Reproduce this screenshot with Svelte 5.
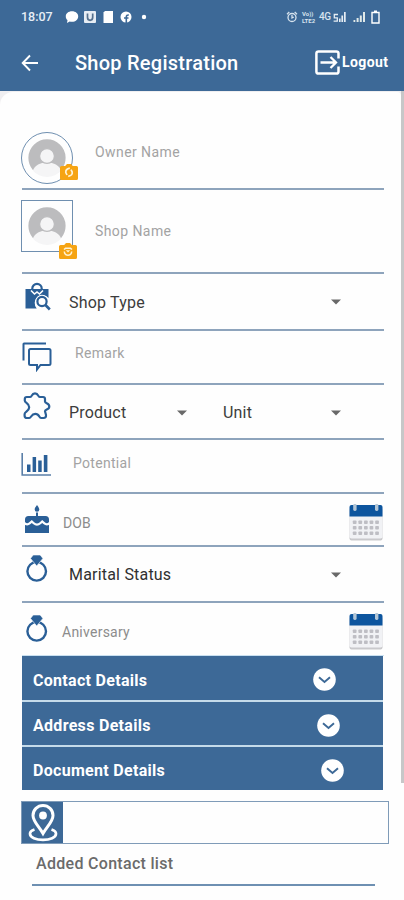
<script>
  const panels = [
    { title: 'Contact Details', cls: 'contact' },
    { title: 'Address Details', cls: 'address' },
    { title: 'Document Details', cls: 'document' }
  ];
  const cols = [5.8, 11.4, 17, 22.6, 28.2];
  const lines = [18.5, 24, 29.5];
</script>

{#snippet person()}
  <svg class="person" width="38" height="38" viewBox="0 0 38 38">
    <path d="M5 31.200A18.600 18.600 0 1 1 33 31.200z" fill="#bcbcbe" />
    <path d="M4.800 31.400C7 26.500 12 23.500 19 23.500s12 3 14.200 7.900A18.600 18.600 0 0 1 4.800 31.400z" fill="#f5f5f6" />
    <circle cx="19" cy="17" r="7.400" fill="#f5f5f6" stroke="#bcbcbe" stroke-width="1.200" />
  </svg>
{/snippet}

{#snippet caret()}
  <svg class="caret" width="10" height="6" viewBox="0 0 10 6"><path d="M0 .4h10L5 5.4z" fill="#696969" /></svg>
{/snippet}

{#snippet ring()}
  <svg class="icon ring" width="22" height="28" viewBox="0 0 22 28">
    <circle cx="10.700" cy="16.300" r="9.300" fill="none" stroke="#2a5f97" stroke-width="2.400" />
    <path d="M7.200 0h7L16.900 3.400 10.700 11 4.500 3.400z" fill="#2a5f97" stroke="#fefefe" stroke-width=".6" />
  </svg>
{/snippet}

{#snippet calendar()}
  <svg class="calendar" width="34" height="37" viewBox="0 0 34 37">
    <rect x=".5" y="4" width="33" height="32.500" rx="2" fill="#c9c9cc" />
    <rect x=".5" y="3" width="33" height="31.500" rx="2" fill="#f1f2f5" />
    <path d="M.5 12.500V3Q.5 1 2.500 1h29q2 0 2 2v9.500z" fill="#0d559e" />
    <rect x="4.200" y="0" width="3.400" height="7" rx="1.400" fill="#b3c6d6" />
    <rect x="26" y="0" width="3.400" height="7" rx="1.400" fill="#b3c6d6" />
    {#each lines as y}
      {#each cols as x}
        <rect x={x - 2} y={y - 2} width="3.700" height="3.500" rx=".8" fill="#bebec4" />
      {/each}
    {/each}
  </svg>
{/snippet}

<div class="screen">
  <header>
    <div class="status">
      <span class="time">18:07</span>
      <svg class="notices" width="84" height="14" viewBox="0 0 84 14">
        <path d="M7 1.200c3.600 0 6.200 2.200 6.200 5.200s-2.600 5.400-6.200 5.400c-1 0-1.600-.1-2.300-.3L2 13l.5-3C1.400 9.200.8 8 .8 6.400.8 3.400 3.400 1.200 7 1.200z" fill="#fff" />
        <rect x="19" y="1" width="12" height="12" rx="1" fill="#e7edf4" />
        <path d="M22.500 3.500v3.800q0 3 2.600 3t2.600-3V3.500" fill="none" stroke="#56718e" stroke-width="1.700" />
        <path d="M40 1h8v12h-9.500V2.500z" fill="#fff" />
        <circle cx="61" cy="7" r="5.500" fill="#fff" />
        <path d="M61.300 13V7.200q0-2.400 2.500-2.200M59 8h4.500" fill="none" stroke="#3d6997" stroke-width="1.600" />
        <circle cx="79" cy="7" r="2.200" fill="#fff" />
      </svg>
      <div class="signals">
        <svg width="12" height="12" viewBox="0 0 12 12" fill="none" stroke="#d7e3ee" stroke-width="1.300">
          <circle cx="6" cy="6.500" r="4" /><path d="M6 4v3l1.800-1M1 3.200 3.300 1M11 3.200 8.700 1" />
        </svg>
        <div class="volte"><span>Vo))</span><span>LTE2</span></div>
        <span class="net">4G</span>
        <svg class="bars" width="13" height="12" viewBox="0 0 13 12">
          <path d="M5 3.500H1.300v3.300h3v3.400H.6" fill="none" stroke="#e6edf4" stroke-width="1.300" />
          <path d="M6 7.500h1.600V11H6zM8.400 4.500h1.700V11H8.400zM11 1h1.700v10H11z" fill="#e6edf4" />
        </svg>
        <svg class="bars2" width="13" height="12" viewBox="0 0 13 12">
          <path d="M.5 9h1.800v2H.5zM3.600 7h2v4h-2zM6.800 4.500h2V11h-2zM10 1h2v10h-2z" fill="#e0e9e8" />
        </svg>
        <svg class="battery" width="9" height="14" viewBox="0 0 9 14">
          <path d="M1 2.500h7v10.500H1z" fill="none" stroke="#fff" stroke-width="1.400" /><path d="M3 .5h3v2H3z" fill="#fff" />
        </svg>
      </div>
    </div>
    <div class="bar">
      <svg class="back" width="18" height="18" viewBox="0 0 18 18" fill="none" stroke="#fff" stroke-width="1.900">
        <path d="M17 9H2M9 1.500 1.700 9 9 16.500" />
      </svg>
      <h1>Shop Registration</h1>
      <svg class="exit" width="25" height="25" viewBox="0 0 25 25" fill="none" stroke="#fff" stroke-width="2.500">
        <path d="M23.500 8.500V3.500Q23.500 1.400 21.400 1.400H3.500Q1.400 1.400 1.400 3.500V21.500Q1.400 23.600 3.500 23.600H21.400Q23.500 23.600 23.500 21.500V16.500" />
        <path d="M5.500 12.500H20.500M15.500 7l5.500 5.500-5.500 5.500" stroke-width="2.300" />
      </svg>
      <span class="logout">Logout</span>
    </div>
  </header>

  <main>
    <div class="card">
      <div class="row owner">
        <div class="avatar round">
          {@render person()}
          <svg class="badge" width="18" height="16" viewBox="0 0 18 16">
            <path d="M1.500 2h3.700L7 0h4l1.800 2h3.700Q18 2 18 3.500v11Q18 16 16.500 16h-15Q0 16 0 14.500v-11Q0 2 1.500 2z" fill="#f6a413" />
            <path d="M9.800 4.200Q5.500 5 5.800 8.500L7 11M8.200 12.300Q12.800 11.500 12.200 8L11 5.600" fill="none" stroke="#fff3d5" stroke-width="1.700" />
          </svg>
        </div>
        <span class="hint">Owner Name</span>
      </div>

      <div class="row shop">
        <div class="avatar square">
          {@render person()}
          <svg class="badge" width="18" height="16" viewBox="0 0 18 16">
            <path d="M1.500 2h3.700L7 0h4l1.800 2h3.700Q18 2 18 3.500v11Q18 16 16.500 16h-15Q0 16 0 14.500v-11Q0 2 1.500 2z" fill="#f6a413" />
            <path d="M5 6.500 6.500 5.300h5L13 6.500M5.300 8.500q.3 3.700 3.700 3.700t3.700-3.700" fill="none" stroke="#fff3d5" stroke-width="1.500" />
            <path d="M6.800 7.200h4.400L9 9.600z" fill="#fff3d5" />
          </svg>
        </div>
        <span class="hint">Shop Name</span>
      </div>

      <div class="row type">
        <svg class="icon" width="26" height="29" viewBox="0 0 26 29">
          <path d="M7.300 9V6.500a4.700 4.700 0 0 1 9.400 0V9" fill="none" stroke="#2a5f97" stroke-width="2.200" />
          <path d="M.5 7h23v9a7.500 7.500 0 0 0-11.800 10.500H.5z" fill="#2a5f97" />
          <path d="M6 8.500 9.500 12l2.500-2 2.500 2L18 8.500" fill="none" stroke="#fff" stroke-width="1.600" />
          <circle cx="17" cy="19.500" r="6.700" fill="#fff" />
          <circle cx="17" cy="19.500" r="4.600" fill="none" stroke="#2a5f97" stroke-width="2.200" />
          <path d="m20.500 23 4.300 4.500" stroke="#2a5f97" stroke-width="2.600" />
        </svg>
        <span class="value">Shop Type</span>
        {@render caret()}
      </div>

      <div class="row remark">
        <svg class="icon" width="30" height="30" viewBox="0 0 30 30" fill="none" stroke="#2a5f97" stroke-width="2">
          <path d="M1.500 18.500V2Q1.500 1.500 2 1.500H24" />
          <path d="M8.500 7h18.500Q28.500 7 28.500 8.500v13Q28.500 23 27 23h-8.500L15 27.500V23H8.500Q7 23 7 21.500v-13Q7 7 8.500 7z" />
        </svg>
        <span class="hint">Remark</span>
      </div>

      <div class="row product">
        <svg class="icon" width="28" height="28" viewBox="0 0 28 28" fill="none" stroke="#2a5f97" stroke-width="2.200" stroke-linejoin="round">
          <path d="M3.800 5H7.300C9.200 5 8.300 1.300 12 1.300S14.800 5 16.700 5H20Q22 5 22 7V9.600C22 11.600 26.300 10.900 26.300 14.400S22 17.200 22 19.200L23 23Q23.300 26 20.500 26H18C16 26 16.500 21.800 12.300 21.800S8.300 26 6.300 26H4Q1.600 26 1.600 23.700V22C1.600 19.800 6.200 19.300 6.200 15.200S1.800 11 1.800 8.800V7Q1.800 5 3.800 5z" />
        </svg>
        <span class="value">Product</span>
        {@render caret()}
        <span class="value unit">Unit</span>
        {@render caret()}
      </div>

      <div class="row potential">
        <svg class="icon" width="31" height="24" viewBox="0 0 31 24">
          <path d="M1.200 0v22H30" fill="none" stroke="#5a7fa8" stroke-width="1.600" />
          <path d="M6 11.500h3.500V19H6zM11.600 4h3.500v15h-3.500zM17.200 7.500h3.500V19h-3.500zM22.800 2h3.600v17h-3.600z" fill="#2a5f97" />
        </svg>
        <span class="hint">Potential</span>
      </div>

      <div class="row dob">
        <svg class="icon" width="24" height="28" viewBox="0 0 24 28" fill="#2a5f97">
          <path d="M12 0q2.600 3.200 2.300 4.400A2.300 2.300 0 0 1 9.700 4.400Q9.500 3.200 12 0zM11 7.500h2V12h-2z" />
          <path d="M3.500 11h17Q24 11 24 14.500V17q-2 2.400-4.200.3L17.200 15l-2.700 2.400q-2.500 2.200-5 0L6.800 15l-2.600 2.300Q2 19.400 0 17V14.500Q0 11 3.500 11z" />
          <path d="M0 20q3 1.300 5.600-1l1.200-1 1.200 1q4 3.400 8 0l1.200-1 1.200 1q2.600 2.300 5.600 1v8H0z" />
        </svg>
        <span class="hint">DOB</span>
        {@render calendar()}
      </div>

      <div class="row marital">
        {@render ring()}
        <span class="value">Marital Status</span>
        {@render caret()}
      </div>

      <div class="row anniversary">
        {@render ring()}
        <span class="hint">Aniversary</span>
        {@render calendar()}
      </div>

      <div class="panels">
        {#each panels as p}
          <div class="panel {p.cls}">
            <span>{p.title}</span>
            <svg width="23" height="23" viewBox="0 0 23 23">
              <circle cx="11.500" cy="11.500" r="11.300" fill="#fff" />
              <path d="m6 9.200 5.500 4.800L17 9.200" fill="none" stroke="#3d6997" stroke-width="1.900" />
            </svg>
          </div>
        {/each}
      </div>

      <div class="location">
        <div class="pin">
          <svg width="30" height="38" viewBox="0 0 30 38" fill="none" stroke="#fff" stroke-width="3">
            <path d="M15 29.500C11 22.500 5 17.500 5 11.500a10 10 0 0 1 20 0c0 6-6 11-10 18z" />
            <circle cx="15" cy="11.500" r="3.900" fill="#fff" stroke="none" />
            <path d="M6.500 25.500C3.500 26.500 2 28.200 2 29.800 2 33.500 8 35.800 15 35.800s13-2.300 13-6c0-1.600-1.500-3.300-4.500-4.300" stroke-width="2.700" />
          </svg>
        </div>
      </div>

      <div class="added">Added Contact list</div>
    </div>
    <div class="scrollbar"></div>
  </main>
</div>

<style>
  :global(body) { background: #fff; }
  .screen {
    width: 404px;
    height: 900px;
    overflow: hidden;
    font-family: Roboto, "Liberation Sans", sans-serif;
    background: #fefefe;
  }
  svg { display: block; flex: none; }
  span { white-space: nowrap; line-height: 20px; }

  header { height: 91px; box-sizing: border-box; background: #3d6997; color: #fff; }
  .status { display: flex; height: 34px; padding-left: 21px; align-items: flex-start; }
  .time { width: 44px; margin-top: 7px; font-size: 12.5px; font-weight: 500; color: #e6eef6; }
  .notices { margin-top: 10px; }
  .signals { display: flex; align-items: flex-start; margin-left: 137px; padding-top: 10px; }
  .signals svg { margin-top: 1px; }
  .volte { display: flex; flex-direction: column; width: 15px; margin-left: 4px; font-size: 6px; font-weight: 700; color: #d7e3ee; }
  .volte span { line-height: 7px; }
  .net { width: 12px; margin-left: 2px; font-size: 10px; font-weight: 500; line-height: 14px; letter-spacing: -.5px; color: #d7e3ee; }
  .signals .bars { margin-left: 2px; }
  .signals .bars2 { margin-left: 7px; }
  .signals .battery { margin: 0 0 0 5px; }
  .bar { display: flex; align-items: flex-start; height: 56px; padding-left: 21px; }
  .back { margin-top: 20px; }
  h1 { width: 163px; margin: 17px 0 0 36px; font-size: 20px; line-height: 24px; font-weight: 500; letter-spacing: .25px; white-space: nowrap; }
  .exit { margin: 16px 0 0 77px; }
  .logout { margin: 18px 0 0 2px; font-size: 14px; font-weight: 700; letter-spacing: .4px; }

  main { display: flex; height: 809px; background: linear-gradient(#f0eff1 0 692px, #fefefe 692px); }
  .card {
    width: 401px;
    height: 808px;
    margin-top: 1px;
    box-sizing: border-box;
    padding-left: 22px;
    border-radius: 13px 4px 0 0;
    background: #fefefe;
  }
  .scrollbar { width: 3px; height: 692px; background: #c7c7c8; }

  .row {
    display: flex;
    align-items: flex-start;
    width: 362px;
    box-sizing: border-box;
    border-bottom: 2px solid #8ea4bc;
  }
  .hint { font-size: 14px; color: #a3a3a3; letter-spacing: .42px; }
  .value { font-size: 16px; color: #3c3c3c; letter-spacing: .2px; }

  .avatar { position: relative; display: flex; justify-content: center; align-items: center; width: 52px; height: 52px; margin-left: -1px; box-sizing: border-box; border: 1px solid #6f8fb0; }
  .round { border-radius: 50%; }
  .badge { position: absolute; }
  .round .badge { left: 38px; top: 31px; }
  .square .badge { left: 37px; top: 42px; }

  .owner { height: 98px; padding-top: 40px; }
  .owner .hint { margin: 10px 0 0 22px; }
  .shop { height: 84px; padding-top: 9px; }
  .square { margin-top: 1px; }
  .shop .hint { margin: 22px 0 0 22px; }
  .type { height: 57px; }
  .type .icon { margin: 8px 0 0 3px; }
  .type .value { width: 262px; margin: 19px 0 0 18px; }
  .caret { margin-top: 25px; }
  .remark { height: 54px; }
  .remark .icon { margin-top: 11px; }
  .remark .hint { margin: 12px 0 0 23px; letter-spacing: .3px; }
  .product { height: 55px; }
  .product .icon { margin: 7px 0 0 1px; }
  .product .value { width: 108px; margin: 18px 0 0 18px; }
  .product .unit { margin-left: 36px; }
  .potential { height: 54px; }
  .potential .icon { margin: 13px 0 0 -1px; }
  .potential .hint { margin: 13px 0 0 21px; letter-spacing: .3px; }
  .dob { height: 53px; }
  .dob .icon { margin: 11px 0 0 3px; }
  .dob .hint { margin: 19px 0 0 14px; color: #8c8c8c; letter-spacing: .1px; }
  .calendar { margin: 10px 1px 0 auto; }
  .marital { height: 56px; }
  .ring { margin: 8px 0 0 4px; }
  .marital .value { width: 262px; margin: 18px 0 0 21px; color: #303030; }
  .anniversary { height: 53px; border-bottom: 1px solid #c9e0f0; }
  .anniversary .ring { margin-top: 12px; }
  .anniversary .hint { margin: 19px 0 0 14px; color: #8c8c8c; letter-spacing: .25px; }

  .panels { display: flex; flex-direction: column; gap: 2px; width: 361px; background: #c5dbea; }
  .panel { display: flex; align-items: center; justify-content: space-between; height: 43px; padding-left: 11px; background: #3d6997; color: #fff; font-size: 16px; font-weight: 700; letter-spacing: .3px; }
  .panel span { padding-top: 5px; }
  .panel svg { margin-top: 3px; }
  .contact { height: 44px; padding-right: 47px; }
  .address { padding-right: 43px; }
  .document { padding-right: 39px; }

  .location { display: flex; width: 368px; height: 43px; margin: 11px 0 0 -1px; box-sizing: border-box; border: 1px solid #7f9bb8; }
  .pin { display: flex; justify-content: center; align-items: center; width: 41px; height: 41px; background: #3d6997; }
  .added { width: 343px; height: 42px; margin-left: 10px; padding: 10px 0 0 4px; box-sizing: border-box; border-bottom: 2px solid #6e90b2; font-size: 16px; line-height: 20px; font-weight: 500; color: #6b6b6b; letter-spacing: .3px; }
</style>
